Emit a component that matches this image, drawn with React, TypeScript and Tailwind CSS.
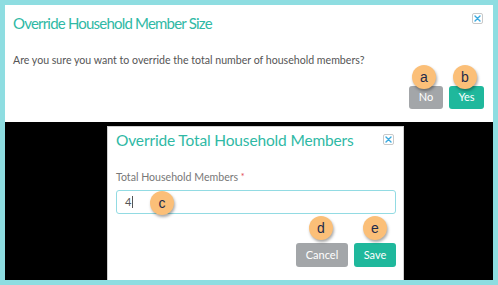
import React from "react";

const Badge = ({ letter, className }: { letter: string; className: string }) => (
  <div
    className={`absolute w-[24px] h-[24px] rounded-full bg-[#fbbf78] flex items-center justify-center text-[#1e2a4a] text-[14px] shadow-[1px_2px_3px_rgba(0,0,0,0.35)] ${className}`}
    style={{ fontFamily: '"Liberation Sans", Arial, sans-serif' }}
  >
    {letter}
  </div>
);

const CloseBox = () => (
  <div className="w-[11px] h-[11px] border border-[#c9c9c9] rounded-[2px] flex items-center justify-center bg-white">
    <svg width="7" height="7" viewBox="0 0 7 7">
      <path d="M1 1L6 6M6 1L1 6" stroke="#39a9de" strokeWidth="1.4" strokeLinecap="round" />
    </svg>
  </div>
);

export default function App() {
  return (
    <div
      className="w-[498px] h-[285px] bg-[#8edde1] p-[5px] flex flex-col overflow-hidden"
      style={{ fontFamily: 'Lato, "Open Sans", sans-serif' }}
    >
      <div className="bg-white h-[117px] shrink-0 flex flex-col px-[8px]">
        <div className="flex items-start justify-between pt-[8px]">
          <div className="text-[15px] tracking-[-0.8px] leading-[20px] text-[#2fb9a5]">Override Household Member Size</div>
          <div className="mt-[0px] mr-[2px]">
            <CloseBox />
          </div>
        </div>
        <div className="mt-[20px] text-[10.6px] leading-[14px] text-[#555]">
          Are you sure you want to override the total number of household members?
        </div>
        <div className="flex justify-end gap-[6px] mt-[19px] mr-[1px]">
          <div className="relative">
            <Badge letter="a" className="left-[3px] -top-[21px]" />
            <div className="w-[34px] h-[23px] rounded-[3px] bg-[#a3a6a9] text-white text-[11px] flex items-center justify-center">
              No
            </div>
          </div>
          <div className="relative">
            <Badge letter="b" className="left-[4px] -top-[21px]" />
            <div className="w-[35px] h-[23px] rounded-[3px] bg-[#1fb89c] text-white text-[11px] flex items-center justify-center">
              Yes
            </div>
          </div>
        </div>
      </div>
      <div className="flex-1 bg-black pt-[4px] flex min-h-0">
        <div className="ml-[102px] w-[297px] bg-white border border-[#cfcfcf] border-b-0 px-[8px]">
          <div className="flex items-start justify-between pt-[3px]">
            <div className="text-[15.5px] tracking-[-0.15px] leading-[20px] text-[#2fb9a5]">Override Total Household Members</div>
            <div className="mt-[4px] mr-[1px]">
              <CloseBox />
            </div>
          </div>
          <div className="mt-[20px] text-[10.6px] leading-[14px] text-[#777]">
            Total Household Members <span className="text-[#e0454f] text-[9px] align-top">*</span>
          </div>
          <div className="relative mt-[6px] w-[280px] h-[24px] border border-[#92dbe3] rounded-[3px] flex items-center px-[8px] text-[11px] text-[#555]">
            <span>4</span>
            <span className="w-[1px] h-[12px] bg-[#555] ml-[1px]" />
            <Badge letter="c" className="left-[33px] top-[0px]" />
          </div>
          <div className="flex justify-end gap-[6px] mt-[29px] w-[280px]">
            <div className="relative">
              <Badge letter="d" className="left-[13px] -top-[27px]" />
              <div className="w-[52px] h-[24px] rounded-[3px] bg-[#a3a6a9] text-white text-[11px] flex items-center justify-center">
                Cancel
              </div>
            </div>
            <div className="relative">
              <Badge letter="e" className="left-[9px] -top-[27px]" />
              <div className="w-[42px] h-[24px] rounded-[3px] bg-[#1fb89c] text-white text-[11px] flex items-center justify-center">
                Save
              </div>
            </div>
          </div>
        </div>
      </div>
    </div>
  );
}
